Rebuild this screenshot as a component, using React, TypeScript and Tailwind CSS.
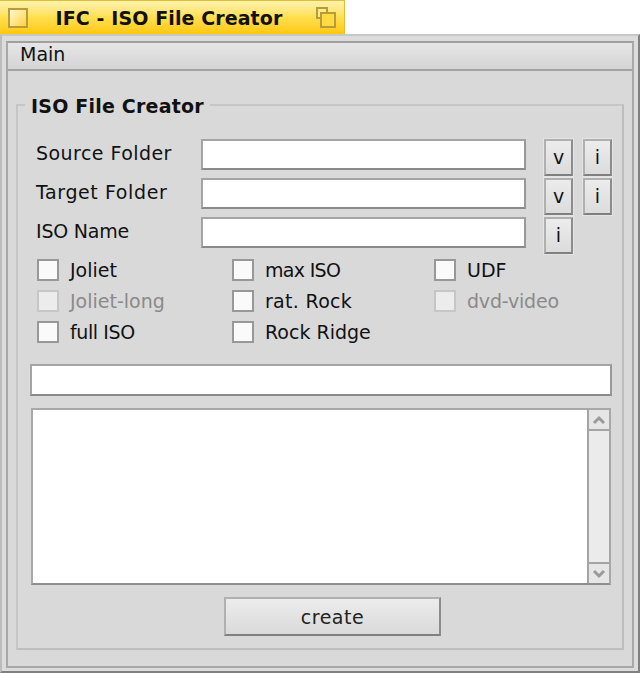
import React from 'react';

const bevel = 'border-2 border-t-[#b0b0b0] border-l-[#b0b0b0] border-r-[#8c8c8c] border-b-[#808080]';

const ToolButton = ({ label }: { label: string }) => (
  <button className={`w-[29px] h-[37px] ${bevel} bg-gradient-to-b from-[#ececec] to-[#dcdcdc] text-[19px] text-[#111] flex items-center justify-center outline outline-1 outline-[#e4e4e4]`}>
    {label}
  </button>
);

const Field = ({ className = '' }: { className?: string }) => (
  <div className={`bg-white border-2 border-[#a4a4a4] border-b-[#8a8a8a] border-r-[#999] ${className}`} />
);

const Check = ({ label, disabled, track = '' }: { label: string; disabled?: boolean; track?: string }) => (
  <div className="flex items-center h-[22px]">
    <div className={`w-[22px] h-[22px] border-2 ${disabled ? 'border-[#c6c6c6] bg-[#ececec]' : 'border-[#989898] bg-[#fafafa]'}`} />
    <span className={`ml-[11px] pt-[1px] ${track} ${disabled ? 'text-[#8a8a8a]' : 'text-[#111]'}`}>{label}</span>
  </div>
);

const Arrow = ({ up }: { up?: boolean }) => (
  <svg width="14" height="10" viewBox="0 0 14 10" fill="none">
    <path d={up ? 'M2 8 L7 3 L12 8' : 'M2 2 L7 7 L12 2'} stroke="#9a9a9a" strokeWidth="3" />
  </svg>
);

const App: React.FC = () => {
  return (
    <div className="w-[640px] h-[673px] bg-white overflow-hidden flex flex-col text-[19px] leading-none" style={{ fontFamily: '"DejaVu Sans", sans-serif' }}>
      {/* Title tab */}
      <div className="w-[345px] h-[34px] shrink-0 bg-gradient-to-b from-[#fff2b0] via-[#ffdf4c] to-[#ffc800] border-r border-t border-[#e0c030] flex items-center pl-[8px] pr-[8px]">
        <div className="w-[20px] h-[20px] border-2 border-[#b89b3a] bg-gradient-to-br from-[#fff8d0] to-[#ffd21e]" />
        <div className="flex-1 text-center font-bold text-[#111] text-[19px] pr-[6px] pt-[1px] tracking-[0.1px]">IFC - ISO File Creator</div>
        <svg width="20" height="21" viewBox="0 0 20 21" fill="none">
          <rect x="1" y="1" width="10" height="10" fill="#ffeb8c" stroke="#b89b3a" strokeWidth="2" />
          <rect x="5" y="6" width="14" height="14" fill="#ffdc40" stroke="#b89b3a" strokeWidth="2" />
        </svg>
      </div>

      {/* Window frame */}
      <div className="flex-1 bg-[#dcdcdc] border-2 border-[#9a9a9a] border-t-[#c8c8c8] border-l-[#bcbcbc] border-b-[#808080] border-r-[#808080] px-[4px] pt-[5px] pb-[3px] flex flex-col">
        <div className="flex-1 border-2 border-[#a8a8a8] border-t-[#a0a0a0] flex flex-col bg-[#d9d9d9]">
          {/* Menu bar */}
          <div className="h-[28px] shrink-0 bg-gradient-to-b from-[#e6e6e6] to-[#d4d4d4] border-b-2 border-[#a2a2a2] flex items-center pl-[12px] pb-[3px] text-[#111]">Main</div>

          {/* Group box */}
          <div className="relative mx-[8px] mt-[33px] h-[546px] border-2 border-[#c6c6c6] border-r-[#bdbdbd] border-b-[#bdbdbd] pl-[13px] pr-[11px]">
            <div className="absolute left-[7px] -top-[9px] bg-[#d9d9d9] px-[6px] font-bold text-[#111] text-[19px] tracking-[0.2px]">ISO File Creator</div>

            <div className="grid grid-cols-[170px_325px_18px_29px_10px_29px] grid-rows-[39px_39px_39px] mt-[33px] items-start relative">
              <div className="pl-[5px] pt-[5px] text-[#111] tracking-[0.45px]">Source Folder</div>
              <Field className="h-[31px] w-[325px]" />
              <div />
              <ToolButton label="v" />
              <div />
              <ToolButton label="i" />

              <div className="pl-[5px] pt-[5px] text-[#111] tracking-[0.6px]">Target Folder</div>
              <Field className="h-[31px] w-[325px]" />
              <div />
              <ToolButton label="v" />
              <div />
              <ToolButton label="i" />

              <div className="pl-[5px] pt-[5px] text-[#111] tracking-[-0.2px]">ISO Name</div>
              <Field className="h-[31px] w-[325px]" />
              <div />
              <ToolButton label="i" />
            </div>

            <div className="grid grid-cols-[195px_202px_150px] gap-y-[9px] mt-[3px] pl-[6px]">
              <Check label="Joliet" />
              <Check label="max ISO" track="tracking-[-0.7px]" />
              <Check label="UDF" />
              <Check label="Joliet-long" disabled />
              <Check label="rat. Rock" track="tracking-[0.3px]" />
              <Check label="dvd-video" disabled track="tracking-[-0.2px]" />
              <Check label="full ISO" track="tracking-[-0.4px]" />
              <Check label="Rock Ridge" />
            </div>

            <Field className="h-[32px] w-[582px] -ml-[1px] mt-[21px]" />

            <div className="flex w-[580px] h-[177px] mt-[12px] border-2 border-[#a8a8a8] border-b-[#8e8e8e] bg-white">
              <div className="flex-1" />
              <div className="w-[22px] flex flex-col bg-[#e4e4e4] border-l-2 border-[#a4a4a4]">
                <div className="h-[21px] flex items-center justify-center bg-[#e6e6e6] border-b-2 border-[#a4a4a4]"><Arrow up /></div>
                <div className="flex-1 bg-[#ebebeb]" />
                <div className="h-[21px] flex items-center justify-center bg-[#e6e6e6] border-t-2 border-[#a4a4a4]"><Arrow /></div>
              </div>
            </div>

            <div className="flex w-[580px] mt-[12px] pl-[193px]">
              <button className={`w-[217px] h-[39px] pt-[1px] ${bevel} bg-gradient-to-b from-[#ececec] to-[#dadada] text-[#222] tracking-[0.5px]`}>create</button>
            </div>
          </div>
        </div>
      </div>
    </div>
  );
};

export default App;
